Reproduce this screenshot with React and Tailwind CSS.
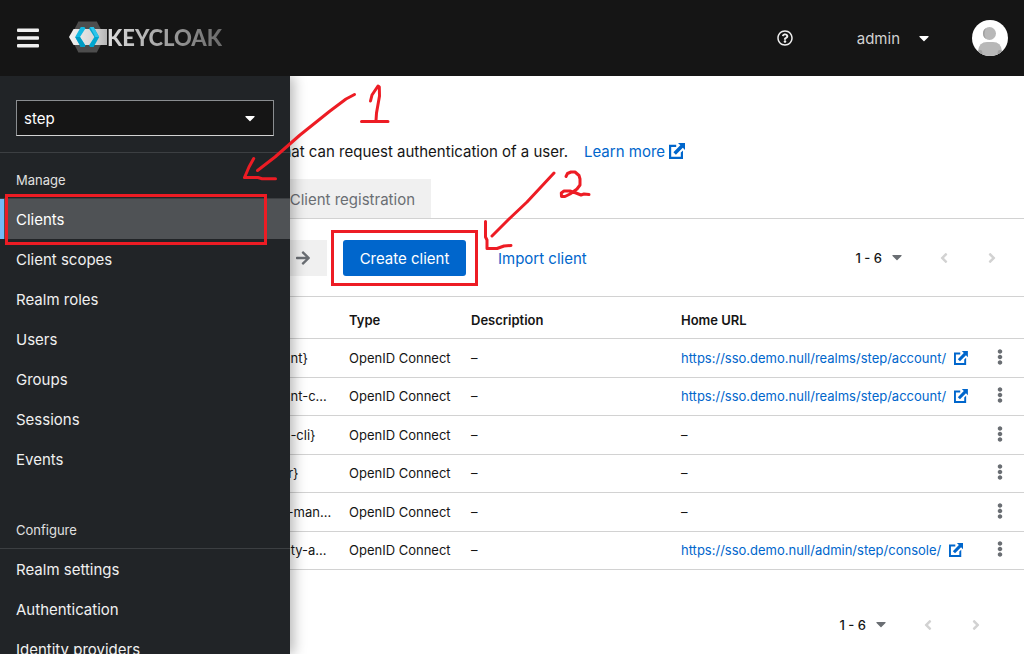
import React from "react";
import { FaAngleLeft, FaAngleRight, FaArrowRight, FaCaretDown, FaEllipsisV, FaRegQuestionCircle } from "react-icons/fa";

const manageItems = ["Clients", "Client scopes", "Realm roles", "Users", "Groups", "Sessions", "Events"];
const configureItems = ["Realm settings", "Authentication", "Identity providers", "User federation"];

const clients = [
  { id: "account", name: "${client_account}", url: "https://sso.demo.null/realms/step/account/" },
  { id: "account-console", name: "${client_account-c...", url: "https://sso.demo.null/realms/step/account/" },
  { id: "admin-cli", name: "${client_admin-cli}" },
  { id: "broker", name: "${client_broker}" },
  { id: "realm-management", name: "${client_realm-man..." },
  { id: "security-admin-console", name: "${client_security-a...", url: "https://sso.demo.null/admin/step/console/" },
];

function ExternalLinkIcon({ className }) {
  return (
    <svg viewBox="0 0 16 16" className={className} fill="currentColor" aria-hidden="true">
      <path d="M0 1.800h7.200v2.200H2.200v9.800h9.600V9.600l2.200-2V16H0z" />
      <path d="M9 0h7v7l-2.200-2.200-6.900 7-2.500-2.500 6.900-7z" />
    </svg>
  );
}

function Logo() {
  return (
    <a href="#home" className="flex items-center" aria-label="Keycloak">
      <svg viewBox="0 0 38 32" className="mb-0.5 h-8 w-[38px]" aria-hidden="true">
        <defs>
          <linearGradient id="band" x1="0" x2="1">
            <stop offset="0" stopColor="#f2f2f2" />
            <stop offset="0.700" stopColor="#d4d4d4" />
            <stop offset="1" stopColor="#b5b5b5" />
          </linearGradient>
        </defs>
        <path d="M9.400 0.400h18.400L36 16l-8.200 15.600H9.400L1.500 16z" fill="#4d4d4d" />
        <path d="M4.600 8H38v16H4.600L0 16z" fill="url(#band)" />
        <path d="M6.200 16 11.800 6H15.300L16.400 7.600 11 16l5.400 8.400L15.300 26H11.800z" fill="#14b9e2" />
        <path d="M6.200 16H11l5.400 8.400L15.300 26H11.800z" fill="#009cc4" />
        <path d="M30.200 16 24.600 6H21.100L20 7.600 25.400 16 20 24.400 21.100 26H24.600z" fill="#00a6d0" />
        <path d="M30.200 16 24.600 6H21.100L26.400 16z" fill="#2cc4ea" />
      </svg>
      <span className="bg-linear-to-r from-[#dedede] to-[#6a6a6a] bg-clip-text font-['Lato_Black',Lato,sans-serif] text-[22px] leading-8 font-black text-transparent">
        KEYCLOAK
      </span>
    </a>
  );
}

function NavGroup({ title, items, current, className }) {
  return (
    <section className={className}>
      <h2 className="border-b border-[#3c3f42] px-4 pb-2 text-[13px] leading-5 text-[#e0e0e0]">{title}</h2>
      <ul>
        {items.map((item) => (
          <li key={item}>
            <a
              href="#nav"
              className={
                item === current
                  ? "block border-l-4 border-[#73bcf7] bg-[#4f5255] pt-0.5 pl-3 leading-[38px] text-white"
                  : "block pt-0.5 pl-4 leading-[38px] text-[#f0f0f0]"
              }
            >
              {item}
            </a>
          </li>
        ))}
      </ul>
    </section>
  );
}

function Pagination({ className }) {
  return (
    <div className={className}>
      <button className="flex items-center gap-[7px] text-[13px] font-medium text-[#151515]">
        <span className="pt-0.5">1 - 6</span>
        <FaCaretDown className="mb-0.5 size-4 text-[#6a6e73]" />
      </button>
      <button className="ml-[27px] grid size-6 place-items-center text-[#d2d2d2]" aria-label="Previous page" disabled>
        <FaAngleLeft className="size-4" />
      </button>
      <button className="ml-6 grid size-6 place-items-center text-[#d2d2d2]" aria-label="Next page" disabled>
        <FaAngleRight className="size-4" />
      </button>
    </div>
  );
}

function Annotations() {
  return (
    <svg
      viewBox="0 0 1024 654"
      className="pointer-events-none absolute top-0 left-0 z-20 w-[1024px]"
      fill="none"
      stroke="#ed1c24"
      strokeWidth="3"
      strokeLinecap="round"
      strokeLinejoin="round"
      aria-hidden="true"
    >
      <g strokeLinejoin="miter">
        <rect x="6.500" y="195.500" width="259" height="48" />
        <rect x="332.500" y="231.500" width="144" height="53" />
      </g>
      <path d="M354.500 94.500 346 99 330 111 300 135 275 157 257.500 170.500" />
      <path d="M253.700 158.500 249 167 244.500 177.500 258 177.500 262 178.700 275.500 178.700" />
      <path d="M370.500 101 372 95 378 86 379.300 87 379.500 96 376.500 113 376 120.500M361.500 121.500H388" />
      <path d="M554 173 527 202 508 220 492 236" />
      <path d="M485.500 221.500V237L487 240V248.500H497L504 246 511 245.500" />
      <path d="M566 176.500 567.500 173.500 571 172H575L579 175.500 580 179V185L577 189 570 194 565 196.500H561.500L561.300 193 564 191H570L576 193 581 195 584 194 589 194.500" />
    </svg>
  );
}

export default function App() {
  return (
    <div className="relative flex h-screen flex-col overflow-hidden bg-white font-[Inter,sans-serif] text-[15px] text-[#151515]">
      <header className="flex h-19 shrink-0 items-center bg-[#151515] px-4 text-[#f0f0f0]">
        <button className="mr-[29px] size-6" aria-label="Toggle navigation">
          <svg viewBox="0 0 24 24" className="size-6" fill="currentColor">
            <rect x="1" y="2.500" width="22" height="3.500" rx="1" />
            <rect x="1" y="10.200" width="22" height="3.500" rx="1" />
            <rect x="1" y="18" width="22" height="3.500" rx="1" />
          </svg>
        </button>
        <Logo />
        <button className="ml-auto" aria-label="Help">
          <FaRegQuestionCircle className="size-4" />
        </button>
        <button className="ml-16 flex items-center gap-4 text-[#d2d2d2]">
          <span className="pt-0.5">admin</span>
          <FaCaretDown className="size-4 text-white" />
        </button>
        <svg viewBox="0 0 36 36" className="ml-10 size-9 rounded-full bg-white" role="img" aria-label="Avatar">
          <path d="M6 36v-5q1-9 9-9h6q8 0 9 9v5z" fill="#b8b8b8" />
          <path d="M6 31q3-2 4 0l1 5H6zM30 31q-3-2-4 0l-1 5h5z" fill="#a0a0a0" />
          <circle cx="17.500" cy="13.500" r="6.500" fill="#b8b8b8" />
          <path d="M14 8a6.500 6.500 0 0 0 0 11q-3-5 0-11" fill="#a0a0a0" />
        </svg>
      </header>

      <div className="relative flex-1 overflow-hidden">
        <nav className="absolute inset-y-0 left-0 z-10 w-[290px] overflow-hidden bg-[#212427] shadow-[4px_0_12px_rgba(3,3,3,0.28)]" aria-label="Main">
          <div className="border-b border-[#3c3f42] px-4 pt-6 pb-4">
            <div className="relative">
              <select
                aria-label="Realm"
                className="block h-9 w-full appearance-none border border-[#8a8d90] border-b-[#d2d2d2] bg-[#151515] px-[7px] pt-0.5 text-white"
              >
                <option>step</option>
              </select>
              <FaCaretDown className="pointer-events-none absolute top-2.5 right-4 size-4 text-white" />
            </div>
          </div>
          <NavGroup title="Manage" items={manageItems} current="Clients" className="pt-[17px]" />
          <NavGroup title="Configure" items={configureItems} className="pt-[41px]" />
        </nav>

        <main>
          <h1 className="px-6 pt-4 text-2xl leading-9">Clients</h1>
          <div className="flex gap-4 pt-3 whitespace-nowrap leading-6">
            <p className="w-[568px] text-right">Clients are applications and services that can request authentication of a user.</p>
            <a href="#docs" className="flex items-center gap-1 text-[#0066cc]">
              Learn more
              <ExternalLinkIcon className="mb-0.5 size-4" />
            </a>
          </div>
          <div className="mt-[15px] flex border-b border-[#d2d2d2] leading-[37px]" role="tablist">
            <div className="flex w-[431px] justify-end whitespace-nowrap">
              <button role="tab" aria-selected="true" className="px-4 pt-0.5">Clients list</button>
              <button role="tab" className="bg-[#f0f0f0] px-4 pt-0.5 text-[#6a6e73]">Initial access token</button>
              <button role="tab" className="bg-[#f0f0f0] px-4 pt-0.5 text-[#6a6e73]">Client registration</button>
            </div>
          </div>

          <div className="flex items-center border-b border-[#d2d2d2] pt-[21px] pr-5 pb-5 pl-6">
            <input aria-label="Search for client" placeholder="Search for client" className="h-9 w-[255px] bg-white px-2" />
            <button className="grid h-9 w-12 place-items-center bg-[#f0f0f0] text-[#6a6e73]" aria-label="Search">
              <FaArrowRight className="size-4" />
            </button>
            <button className="ml-4 h-9 w-[123px] rounded-[3px] bg-[#0066cc] pt-0.5 text-white">Create client</button>
            <button className="ml-4 h-9 px-4 pt-0.5 text-[#0066cc]">Import client</button>
            <Pagination className="ml-auto flex items-center" />
          </div>

          <table className="w-full table-fixed border-collapse text-left text-[13px] whitespace-nowrap">
            <colgroup>
              <col className="w-[192px]" />
              <col className="w-[149px]" />
              <col className="w-[122px]" />
              <col className="w-[210px]" />
              <col />
              <col className="w-12" />
            </colgroup>
            <thead>
              <tr className="h-[41px] border-b border-[#d2d2d2]">
                <th className="pt-1.5 pl-6 font-semibold">Client ID</th>
                <th className="px-2 pt-1.5 font-semibold">Name</th>
                <th className="px-2 pt-1.5 font-semibold">Type</th>
                <th className="px-2 pt-1.5 font-semibold">Description</th>
                <th className="px-2 pt-1.5 font-semibold">Home URL</th>
                <th aria-label="Actions" />
              </tr>
            </thead>
            <tbody>
              {clients.map((client) => (
                <tr key={client.id} className="border-b border-[#d2d2d2] odd:h-[39px] even:h-[38px]">
                  <td className="pt-0.5 pl-6"><a href="#client" className="text-[#0066cc]">{client.id}</a></td>
                  <td className="px-2 pt-0.5">{client.name}</td>
                  <td className="px-2 pt-0.5">OpenID Connect</td>
                  <td className="px-2 pt-0.5">–</td>
                  <td className="px-2 pt-0.5">
                    {client.url ? (
                      <a href="#url" className="flex items-center gap-2 text-[#0066cc]">
                        {client.url}
                        <ExternalLinkIcon className="mb-0.5 size-[14px]" />
                      </a>
                    ) : "–"}
                  </td>
                  <td>
                    <button className="mx-auto block pb-0.5 text-[#6a6e73]" aria-label={"Actions for " + client.id}>
                      <FaEllipsisV className="size-4" />
                    </button>
                  </td>
                </tr>
              ))}
            </tbody>
          </table>
          <Pagination className="flex items-center justify-end pt-[43px] pr-9" />
        </main>
      </div>
      <Annotations />
    </div>
  );
}
